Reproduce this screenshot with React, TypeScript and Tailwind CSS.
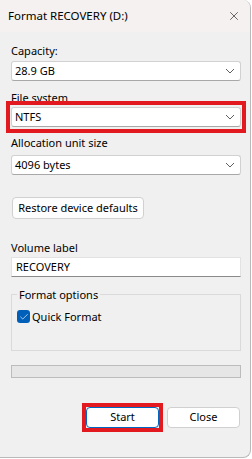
import { Check, X } from "lucide-react";

const font = { fontFamily: '"Segoe UI", "Noto Sans", "Open Sans", sans-serif' };

function Chevron() {
  return (
    <svg width="10" height="6" viewBox="0 0 10 6" className="text-[#5f5f5f]">
      <path d="M1 1l4 4 4-4" fill="none" stroke="currentColor" strokeWidth="1" />
    </svg>
  );
}

function Combo({ value, highlight }: { value: string; highlight?: boolean }) {
  return (
    <div className="relative">
      <div className="flex h-[20px] items-center justify-between rounded-[3px] border border-[#d1d1d1] border-b-[#a8a8a8] bg-white pl-[3px] pr-[5px]">
        <span>{value}</span>
        <Chevron />
      </div>
      {highlight && (
        <div className="pointer-events-none absolute -inset-x-[5px] -inset-y-[6px] border-[4px] border-[#e2191f]" />
      )}
    </div>
  );
}

function Label({ children }: { children: string }) {
  return <div className="h-[15px] leading-[15px]">{children}</div>;
}

export default function App() {
  return (
    <div className="h-[459px] w-[252px] bg-white text-[11px] text-black" style={font}>
      <div className="flex h-[458px] w-[251px] flex-col overflow-hidden rounded-r-[8px] border-b border-r border-[#b9b9b9] bg-[#f0f0f0]">
        {/* title bar */}
        <div className="flex h-[32px] shrink-0 items-center justify-between bg-[#f4f1f0] pl-[8px] pr-[9px]">
          <span className="text-[11.5px]">Format RECOVERY (D:)</span>
          <X size={14} strokeWidth={1.1} className="text-[#1b1b1b]" />
        </div>

        <div className="flex flex-col px-[11px] pr-[9px]">
          <div className="mt-[11px]">
            <Label>Capacity:</Label>
          </div>
          <div className="mt-[3px]">
            <Combo value="28.9 GB" />
          </div>

          <div className="mt-[9px]">
            <Label>File system</Label>
          </div>
          <div className="mt-[2px]">
            <Combo value="NTFS" highlight />
          </div>

          <div className="mt-[8px]">
            <Label>Allocation unit size</Label>
          </div>
          <div className="mt-[5px]">
            <Combo value="4096 bytes" />
          </div>

          <div className="mt-[22px] pl-[1px]">
            <button className="h-[22px] w-[132px] rounded-[4px] border border-[#d0d0d0] bg-[#fdfdfd] text-center">
              Restore device defaults
            </button>
          </div>

          <div className="mt-[21px]">
            <Label>Volume label</Label>
          </div>
          <div className="mt-[2px] flex h-[20px] items-center border border-[#e2e2e2] border-b-[#8a8a8a] bg-white pl-[4px]">
            RECOVERY
          </div>

          <div className="relative mt-[17px] h-[57px] border border-[#dadada]">
            <span className="absolute -top-[8px] left-[5px] bg-[#f0f0f0] px-[2px] leading-[15px]">
              Format options
            </span>
            <div className="mt-[14px] flex items-center gap-[2px] pl-[5px]">
              <div className="flex h-[13px] w-[13px] items-center justify-center rounded-[3px] bg-[#005fb8]">
                <Check size={10} strokeWidth={1.6} className="text-white" />
              </div>
              <span className="leading-[15px]">Quick Format</span>
            </div>
          </div>

          <div className="mt-[14px] h-[13px] border border-[#bcbcbc] bg-[#e6e6e6]" />

          <div className="mt-[29px] flex justify-end gap-[8px] pr-[1px]">
            <div className="relative">
              <button className="h-[21px] w-[73px] rounded-[4px] border border-[#0067c0] bg-white">Start</button>
              <div className="pointer-events-none absolute -inset-x-[4px] -inset-y-[4px] border-[4px] border-[#e2191f]" />
            </div>
            <button className="h-[21px] w-[73px] rounded-[4px] border border-[#d0d0d0] bg-white">Close</button>
          </div>
        </div>
      </div>
    </div>
  );
}
